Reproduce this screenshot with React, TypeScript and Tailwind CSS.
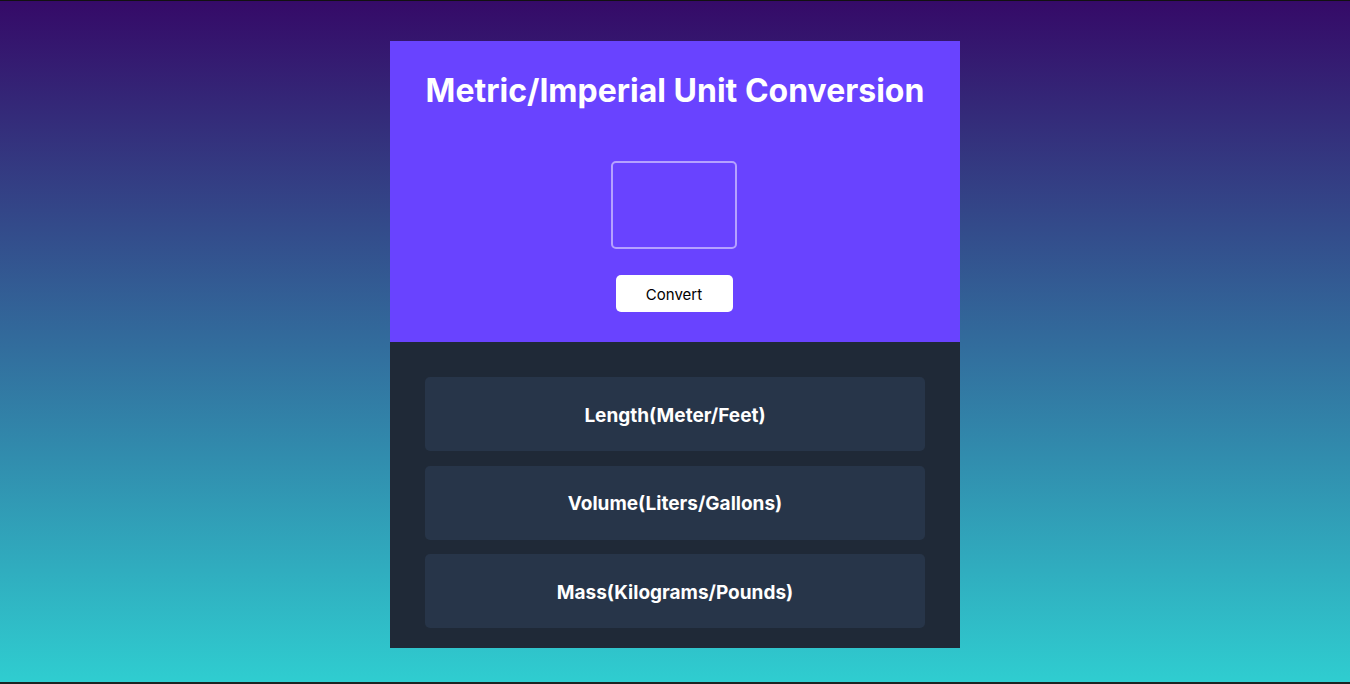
export default function App() {
  const units = [
    "Length(Meter/Feet)",
    "Volume(Liters/Gallons)",
    "Mass(Kilograms/Pounds)",
  ];

  return (
    <div
      className="h-[684px] w-full border-t border-t-[#111] border-b-2 border-b-[#1a2421] bg-[linear-gradient(to_bottom,#350a68,#2fcdd0)] flex justify-center"
      style={{ fontFamily: "Inter, 'Noto Sans', sans-serif" }}
    >
      <div className="mt-10 w-[570px] h-[607px] flex flex-col">
        {/* top - input */}
        <div className="h-[301px] bg-[#6943ff] flex flex-col items-center pt-[30px]">
          <h1 className="text-[32px] leading-[40px] font-bold text-white">
            Metric/Imperial Unit Conversion
          </h1>
          <input
            type="text"
            className="mt-[50px] w-[126px] h-[88px] -translate-x-px rounded-[5px] border-2 border-[#b5a1ff] bg-transparent text-white text-center text-3xl outline-none"
          />
          <button className="mt-[26px] w-[117px] h-[37px] -translate-x-px rounded-[5px] bg-white text-black text-[15px] leading-[37px] pt-px">
            Convert
          </button>
        </div>

        {/* bottom - results */}
        <div className="flex-1 bg-[#1f2937] px-[35px] pt-[35px] flex flex-col gap-[14.5px]">
          {units.map((u) => (
            <div
              key={u}
              className="h-[74px] shrink-0 rounded-[5px] bg-[#273549] flex items-center justify-center text-white text-[19px] font-bold pt-[4px]"
            >
              {u}
            </div>
          ))}
        </div>
      </div>
    </div>
  );
}
